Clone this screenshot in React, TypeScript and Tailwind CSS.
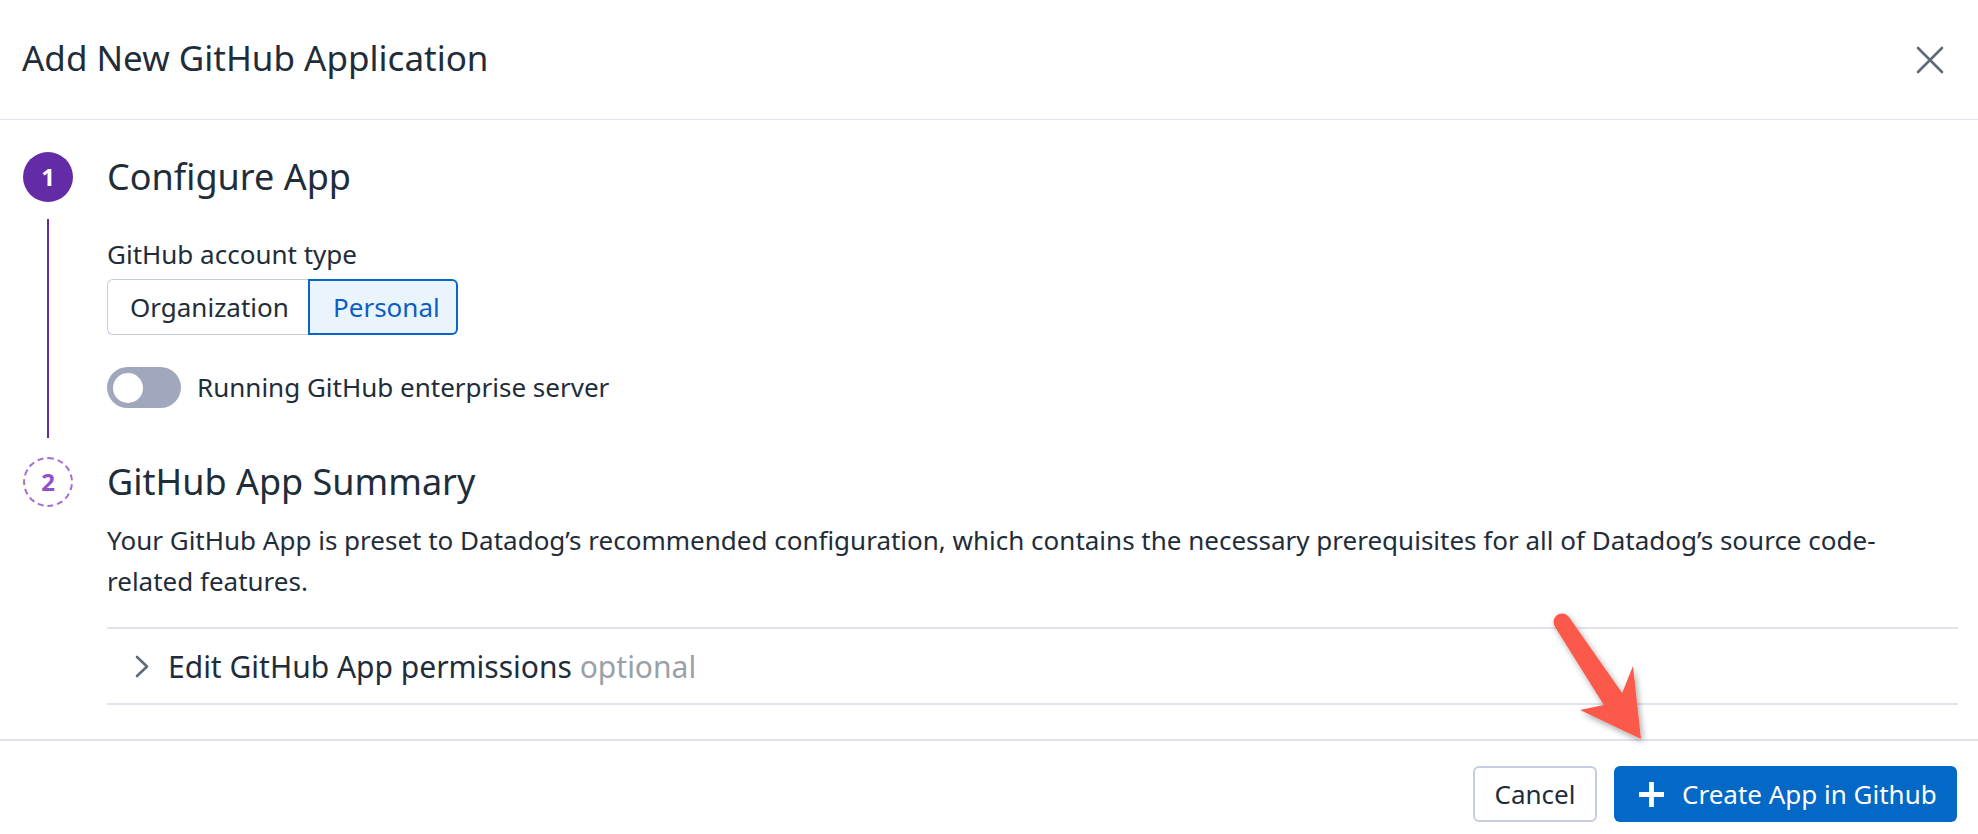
import React from "react";

function CloseIcon() {
  return (
    <svg width="28" height="28" viewBox="0 0 28 28" fill="none">
      <path d="M2 2 L26 26 M26 2 L2 26" stroke="#5e6a77" strokeWidth="2.6" strokeLinecap="round" />
    </svg>
  );
}

function Chevron() {
  return (
    <svg width="14" height="23" viewBox="0 0 14 23" fill="none">
      <path d="M2 2 L12 11.5 L2 21" stroke="#5f6b77" strokeWidth="2.6" strokeLinecap="round" strokeLinejoin="round" />
    </svg>
  );
}

function PlusIcon() {
  return (
    <svg width="27" height="27" viewBox="0 0 27 27" fill="none">
      <path d="M13.5 1 V26 M1 13.5 H26" stroke="#ffffff" strokeWidth="4.8" />
    </svg>
  );
}

function Arrow() {
  return (
    <svg
      className="absolute inset-0 pointer-events-none"
      width="1978"
      height="834"
      viewBox="0 0 1978 834"
    >
      <defs>
        <filter id="shadow" x="-20%" y="-20%" width="140%" height="140%">
          <feDropShadow dx="2" dy="3" stdDeviation="3" floodColor="#000" floodOpacity="0.35" />
        </filter>
      </defs>
      <g filter="url(#shadow)" fill="#fb5a4b">
        <circle cx="1562" cy="622" r="8.5" />
        <polygon points="1569.1,617.3 1622.2,692.9 1633,666 1641,739 1580,710 1603.8,705.1 1554.9,626.7" />
      </g>
    </svg>
  );
}

export default function App() {
  return (
    <div className="relative w-[1978px] h-[834px] bg-white overflow-hidden font-['Noto_Sans',sans-serif] text-[#1f2d3a]">
      {/* Header */}
      <div className="h-[120px] flex items-center justify-between pl-[22px] pr-[34px] border-b border-[#e1e4ea]">
        <h1 className="text-[35px] leading-none pb-[4px]">Add New GitHub Application</h1>
        <CloseIcon />
      </div>

      {/* Body */}
      <div className="pl-[23px] pr-[20px] pt-[32px] h-[619px]">
        {/* Step 1 */}
        <div className="flex">
          <div className="w-[50px] flex flex-col items-center">
            <div className="w-[50px] h-[50px] rounded-full bg-[#632ca6] text-white flex items-center justify-center text-[24px] font-bold">
              1
            </div>
            <div className="w-[2px] flex-1 bg-[#632ca6] mt-[17px] mb-[19px]" />
          </div>
          <div className="ml-[34px] flex-1 pb-[49px]">
            <div className="h-[50px] flex items-center text-[36px]">Configure App</div>
            <div className="mt-[35px] text-[26px] leading-[34px]">GitHub account type</div>
            <div className="mt-[8px] flex text-[26px]">
              <div className="h-[56px] w-[201px] flex items-center pl-[22px] border border-[#c5cbdf] rounded-l-[6px] border-r-0">
                Organization
              </div>
              <div className="h-[56px] w-[150px] flex items-center pl-[23px] border-2 border-[#0b64c7] bg-[#eaf4fc] text-[#0c5ec4] rounded-r-[6px]">
                Personal
              </div>
            </div>
            <div className="mt-[32px] flex items-center">
              <div className="w-[74px] h-[41px] rounded-full bg-[#a1a7bd] flex items-center pl-[6px]">
                <div className="w-[30px] h-[30px] rounded-full bg-white" />
              </div>
              <span className="ml-[16px] text-[26px]">Running GitHub enterprise server</span>
            </div>
          </div>
        </div>

        {/* Step 2 */}
        <div className="flex">
          <div className="w-[50px] flex flex-col items-center">
            <div className="w-[50px] h-[50px] rounded-full border-2 border-dashed border-[#a66cd5] text-[#9052c6] flex items-center justify-center text-[24px] font-bold">
              2
            </div>
          </div>
          <div className="ml-[34px] flex-1">
            <div className="h-[50px] flex items-center text-[36px]">GitHub App Summary</div>
            <p className="mt-[13px] text-[26px] leading-[41px]">
              Your GitHub App is preset to Datadog’s recommended configuration, which contains the necessary prerequisites for all of Datadog’s source code-
              <br />
              related features.
            </p>
            <div className="mt-[25px] h-[78px] border-y-2 border-[#e1e4ea] flex items-center pl-[28px]">
              <Chevron />
              <span className="ml-[19px] text-[30px]">
                Edit GitHub App permissions <span className="text-[#9aa0a8]">optional</span>
              </span>
            </div>
          </div>
        </div>
      </div>

      {/* Footer */}
      <div className="h-[95px] border-t-2 border-[#e1e4ea] flex justify-end items-start pt-[25px] pr-[21px] gap-[17px]">
        <button className="h-[56px] w-[124px] rounded-[6px] border-2 border-[#c7cde0] bg-white text-[26px] text-[#1f2d3a] flex items-center justify-center">
          Cancel
        </button>
        <button className="h-[56px] w-[343px] rounded-[6px] bg-[#0468c6] text-white text-[26px] flex items-center pl-[24px]">
          <PlusIcon />
          <span className="ml-[17px]">Create App in Github</span>
        </button>
      </div>

      <Arrow />
    </div>
  );
}
